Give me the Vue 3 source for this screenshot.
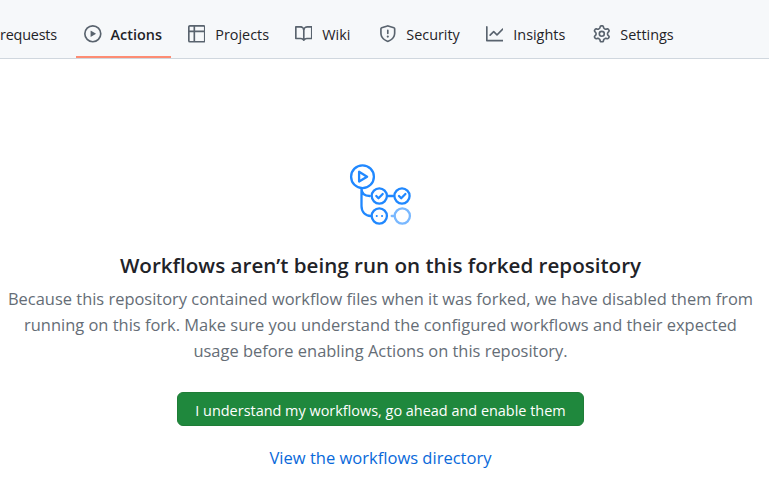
<script setup>
const tabs = [
  { name: 'Actions', active: true, paths: ['M8 0a8 8 0 1 1 0 16A8 8 0 0 1 8 0ZM1.5 8a6.5 6.5 0 1 0 13 0 6.5 6.5 0 0 0-13 0Zm4.879-2.773 4.264 2.559a.25.25 0 0 1 0 .428l-4.264 2.559A.25.25 0 0 1 6 10.559V5.442a.25.25 0 0 1 .379-.215Z'] },
  { name: 'Projects', paths: ['M0 1.75C0 .784.784 0 1.75 0h12.5C15.216 0 16 .784 16 1.75v12.5A1.75 1.75 0 0 1 14.25 16H1.75A1.75 1.75 0 0 1 0 14.25ZM6.5 6.5v8h7.75a.25.25 0 0 0 .25-.25V6.5Zm8-1.5V1.75a.25.25 0 0 0-.25-.25H6.5V5Zm-13 1.5v7.75c0 .138.112.25.25.25H5v-8ZM5 5V1.5H1.75a.25.25 0 0 0-.25.25V5Z'] },
  { name: 'Wiki', paths: ['M0 1.75A.75.75 0 0 1 .75 1h4.253c1.227 0 2.317.59 3 1.501A3.743 3.743 0 0 1 11.006 1h4.245a.75.75 0 0 1 .75.75v10.5a.75.75 0 0 1-.75.75h-4.507a2.25 2.25 0 0 0-1.591.659l-.622.621a.75.75 0 0 1-1.06 0l-.622-.621A2.25 2.25 0 0 0 5.258 13H.75a.75.75 0 0 1-.75-.75Zm7.251 10.324.004-5.073-.002-2.253A2.25 2.25 0 0 0 5.003 2.5H1.5v9h3.757a3.75 3.75 0 0 1 1.994.574ZM8.755 4.75l-.004 7.322a3.752 3.752 0 0 1 1.992-.572H14.5v-9h-3.495a2.25 2.25 0 0 0-2.25 2.25Z'] },
  { name: 'Security', paths: ['M7.467.133a1.748 1.748 0 0 1 1.066 0l5.25 1.68A1.75 1.75 0 0 1 15 3.48V7c0 1.566-.32 3.182-1.303 4.682-.983 1.498-2.585 2.813-5.032 3.855a1.697 1.697 0 0 1-1.33 0c-2.447-1.042-4.049-2.357-5.032-3.855C1.32 10.182 1 8.566 1 7V3.48a1.75 1.75 0 0 1 1.217-1.667Zm.61 1.429a.25.25 0 0 0-.153 0l-5.25 1.68a.25.25 0 0 0-.174.238V7c0 1.358.275 2.666 1.057 3.86.784 1.194 2.121 2.34 4.366 3.297a.196.196 0 0 0 .154 0c2.245-.956 3.582-2.104 4.366-3.298C13.225 9.666 13.5 8.36 13.5 7V3.48a.251.251 0 0 0-.174-.237l-5.25-1.68ZM8.75 4.75v3a.75.75 0 0 1-1.5 0v-3a.75.75 0 0 1 1.5 0ZM9 10.5a1 1 0 1 1-2 0 1 1 0 0 1 2 0Z'] },
  { name: 'Insights', paths: ['M1.5 1.75V13.5h13.75a.75.75 0 0 1 0 1.5H.75a.75.75 0 0 1-.75-.75V1.75a.75.75 0 0 1 1.5 0Zm14.28 2.53-5.25 5.25a.75.75 0 0 1-1.06 0L7 7.06 4.28 9.78a.751.751 0 0 1-1.06-1.06l3.25-3.25a.75.75 0 0 1 1.06 0L10 7.94l4.72-4.72a.751.751 0 0 1 1.06 1.06Z'] },
  { name: 'Settings', paths: ['M8 0a8.2 8.2 0 0 1 .701.031C9.444.095 9.99.645 10.16 1.29l.288 1.107c.018.066.079.158.212.224.231.114.454.243.668.386.123.082.233.09.299.071l1.103-.303c.644-.176 1.392.021 1.82.63.27.385.506.792.704 1.218.315.675.111 1.422-.364 1.891l-.814.806c-.049.048-.098.147-.088.294.016.257.016.515 0 .772-.01.147.038.246.088.294l.814.806c.475.469.679 1.216.364 1.891a7.977 7.977 0 0 1-.704 1.217c-.428.61-1.176.807-1.82.63l-1.102-.302c-.067-.019-.177-.011-.3.071a5.909 5.909 0 0 1-.668.386c-.133.066-.194.158-.211.224l-.29 1.106c-.168.646-.715 1.196-1.458 1.26a8.006 8.006 0 0 1-1.402 0c-.743-.064-1.289-.614-1.458-1.26l-.289-1.106c-.018-.066-.079-.158-.212-.224a5.738 5.738 0 0 1-.668-.386c-.123-.082-.233-.09-.299-.071l-1.103.303c-.644.176-1.392-.021-1.82-.63a8.12 8.12 0 0 1-.704-1.218c-.315-.675-.111-1.422.363-1.891l.815-.806c.05-.048.098-.147.088-.294a6.214 6.214 0 0 1 0-.772c.01-.147-.038-.246-.088-.294l-.815-.806C.635 6.045.431 5.298.746 4.623a7.92 7.92 0 0 1 .704-1.217c.428-.61 1.176-.807 1.82-.63l1.102.302c.067.019.177.011.3-.071.214-.143.437-.272.668-.386.133-.066.194-.158.211-.224l.29-1.106C6.009.645 6.556.095 7.299.03 7.53.01 7.764 0 8 0Zm-.571 1.525c-.036.003-.108.036-.137.146l-.289 1.105c-.147.561-.549.967-.998 1.189-.173.086-.34.183-.5.29-.417.278-.97.423-1.529.27l-1.103-.303c-.109-.03-.175.016-.195.045-.22.312-.412.644-.573.99-.014.031-.021.11.059.19l.815.806c.411.406.562.957.53 1.456a4.709 4.709 0 0 0 0 .582c.032.499-.119 1.05-.53 1.456l-.815.806c-.081.08-.073.159-.059.19.162.346.353.677.573.989.02.03.085.076.195.046l1.102-.303c.56-.153 1.113-.008 1.53.27.161.107.328.204.501.29.447.222.85.629.997 1.189l.289 1.105c.029.109.101.143.137.146a6.6 6.6 0 0 0 1.142 0c.036-.003.108-.036.137-.146l.289-1.105c.147-.561.549-.967.998-1.189.173-.086.34-.183.5-.29.417-.278.97-.423 1.529-.27l1.103.303c.109.029.175-.016.195-.045.22-.313.411-.644.573-.99.014-.031.021-.11-.059-.19l-.815-.806c-.411-.406-.562-.957-.53-1.456a4.709 4.709 0 0 0 0-.582c-.032-.499.119-1.05.53-1.456l.815-.806c.081-.08.073-.159.059-.19a6.464 6.464 0 0 0-.573-.989c-.02-.03-.085-.076-.195-.046l-1.102.303c-.56.153-1.113.008-1.53-.27a4.44 4.44 0 0 0-.501-.29c-.447-.222-.85-.629-.997-1.189l-.289-1.105c-.029-.11-.101-.143-.137-.146a6.6 6.6 0 0 0-1.142 0ZM11 8a3 3 0 1 1-6 0 3 3 0 0 1 6 0ZM9.5 8a1.5 1.5 0 1 0-3.001.001A1.5 1.5 0 0 0 9.5 8Z'] },
]
</script>

<template>
  <div class="page">
    <nav class="tabs">
      <a class="tab partial"><span class="label">requests</span></a>
      <a v-for="tab in tabs" :key="tab.name" class="tab" :class="{ active: tab.active }">
        <svg class="icon" viewBox="0 0 16 16"><path v-for="d in tab.paths" :key="d" :d="d" /></svg>
        <span class="label">{{ tab.name }}</span>
      </a>
    </nav>
    <main class="blank">
      <svg class="art" viewBox="0 0 64 64" fill="none" stroke="#2088ff" stroke-width="2.3" stroke-linecap="round" stroke-linejoin="round">
        <circle cx="13.5" cy="13.7" r="11.4" />
        <path d="M10.1 8.8v9.8l8-4.9Z" />
        <path d="M12.5 25.5V43c0 6 3.8 10 9.3 10M12.5 25.5c0 4.6 3 7.5 8.3 7.5M38.5 33h6" />
        <circle cx="30.3" cy="33" r="7.6" />
        <circle cx="53" cy="33" r="7.6" />
        <circle cx="30.3" cy="53" r="7.6" />
        <path d="m27.3 33 2.2 2.2 4.2-4.2M50 33l2.2 2.2 4.2-4.2" />
        <path class="dots" d="M27.7 53h.1M33 53h.1" />
        <g stroke="#79b8ff"><circle cx="53.3" cy="53" r="7.6" /><path d="M42.7 53h2" /></g>
      </svg>
      <h3>Workflows aren’t being run on this forked repository</h3>
      <p>
        <span class="line">Because this repository contained workflow files when it was forked, we have disabled them from</span>
        <span class="line">running on this fork. Make sure you understand the configured workflows and their expected</span>
        <span class="line">usage before enabling Actions on this repository.</span>
      </p>
      <button type="button">I understand my workflows, go ahead and enable them</button>
      <a class="link">View the workflows directory</a>
    </main>
  </div>
</template>

<style>
body { background: #fff; overflow: hidden; }
</style>

<style scoped>
.page { width: 769px; height: 485px; overflow: hidden; font-family: "Open Sans", "Noto Sans", sans-serif; color: #1f2328; }
.tabs { box-sizing: border-box; height: 59px; display: grid; grid-template-columns: 76px 103.5px 107px 84px 107px 107px 120px; background: #f6f8fa; border-bottom: 1px solid #d0d7de; }
.tab { display: flex; align-items: center; box-sizing: border-box; height: 58px; padding: 10px 0 0 8px; gap: 10.2px; font-size: 14.4px; white-space: nowrap; }
.partial { padding-left: 0; letter-spacing: -0.2px; }
.active { width: 95px; gap: 9px; font-weight: 600; border-bottom: 2px solid #fd8c73; padding-top: 12px; }
.icon { width: 17.6px; height: 17.6px; flex: none; fill: #59636e; }
.label { line-height: 22px; padding-top: 2px; }
.blank { display: flex; flex-direction: column; align-items: center; width: 761px; padding-top: 104px; }
.art { width: 64px; height: 64px; flex: none; }
.dots { stroke-width: 2; }
h3 { margin: 22px 0 0; font-size: 20.6px; line-height: 33px; font-weight: 600; white-space: nowrap; }
p { margin: 4px 0 0; color: #656d76; font-size: 16.44px; line-height: 26px; text-align: center; display: flex; flex-direction: column; align-items: center; }
.line { white-space: nowrap; }
button { box-sizing: border-box; width: 407px; height: 34px; margin: 28px 0 0; padding: 3px 0 0; border: 1px solid #1f7d37; border-radius: 6px; background: #1f883d; color: #fff; font-family: inherit; font-size: 14.44px; line-height: 22px; white-space: nowrap; }
.link { margin-top: 19px; color: #0969da; font-size: 16.55px; line-height: 26px; }
</style>
